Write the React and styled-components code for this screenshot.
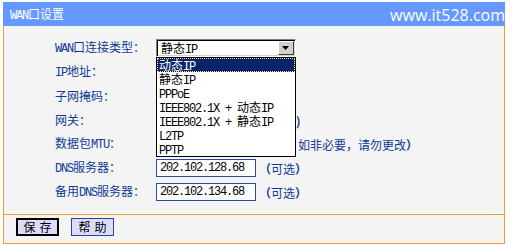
import React from 'react';
import styled, { createGlobalStyle } from 'styled-components';

const GlobalStyle = createGlobalStyle`
  body {
    margin: 0;
    background: #ffffff;
    font-family: "Noto Sans CJK SC", sans-serif;
    font-size: 12px;
  }
`;

const Panel = styled.div`
  margin: 2px 0 0 3px;
  width: 502px;
  box-sizing: border-box;
`;

const Header = styled.div`
  height: 24px;
  background: #6699ff;
  display: flex;
  align-items: center;
  justify-content: space-between;
  padding-left: 7px;
  color: #ffffff;
  overflow: hidden;
`;

const Title = styled.span`
  font-size: 12px;
`;

const Watermark = styled.span`
  font-family: "Open Sans", sans-serif;
  font-size: 16px;
  color: #ffffff;
  margin-top: 1px;
`;

const Body = styled.div`
  background: #f4f4f4;
  border-left: 1px solid #ff9933;
  border-right: 1px solid #ff9933;
  padding: 13px 0 13px 51px;
  display: flex;
  flex-direction: column;
  gap: 6px;
`;

const Row = styled.div`
  display: flex;
  align-items: center;
  height: 18px;
`;

const Label = styled.span`
  width: 101px;
  color: #123a9a;
  white-space: nowrap;
  line-height: 18px;
`;

const Asc = styled.span`
  font-family: "Liberation Mono", monospace;
  letter-spacing: -1.2px;
`;

const SelectWrap = styled.div`
  position: relative;
  width: 140px;
  height: 18px;
`;

const SelectBox = styled.div`
  box-sizing: border-box;
  height: 18px;
  width: 140px;
  background: #ffffff;
  border-top: 1px solid #808080;
  border-left: 1px solid #808080;
  border-bottom: 1px solid #ffffff;
  border-right: 1px solid #ffffff;
  box-shadow: inset 1px 1px 0 #000000, inset -1px -1px 0 #d4d0c8;
  display: flex;
  align-items: center;
  justify-content: space-between;
  padding-left: 4px;
  color: #000000;
`;

const ArrowBtn = styled.div`
  box-sizing: border-box;
  width: 16px;
  height: 14px;
  margin-right: 1px;
  background: #d4d0c8;
  border-top: 1px solid #ffffff;
  border-left: 1px solid #ffffff;
  border-bottom: 1px solid #404040;
  border-right: 1px solid #404040;
  display: flex;
  align-items: center;
  justify-content: center;
`;

const DropList = styled.ul`
  position: absolute;
  top: 18px;
  left: 0;
  width: 140px;
  box-sizing: border-box;
  margin: 0;
  padding: 0;
  list-style: none;
  background: #ffffff;
  border: 1px solid #000000;
  z-index: 2;
`;

const Item = styled.li`
  box-sizing: border-box;
  height: 14px;
  line-height: 12px;
  padding-left: 1px;
  white-space: nowrap;
  color: ${(p) => (p.$active ? '#ffffff' : '#000000')};
  background: ${(p) => (p.$active ? '#0a246a' : 'transparent')};
  border: 1px ${(p) => (p.$active ? 'dotted #ffe08a' : 'solid transparent')};
`;

const TextInput = styled.div`
  box-sizing: border-box;
  width: 100px;
  height: 18px;
  background: #ffffff;
  border: 1px solid #2a4aa8;
  padding-left: 3px;
  display: flex;
  align-items: center;
  color: #000000;
`;

const Note = styled.span`
  color: #123a9a;
  white-space: nowrap;
  margin-left: ${(p) => p.$offset || 3}px;
`;

const Bracket = styled.b`
  color: #123a9a;
`;

const Footer = styled.div`
  background: #f4f4f4;
  border: 1px solid #ff9933;
  height: 25px;
  padding: 3px 0 0 12px;
  box-sizing: content-box;
  display: flex;
  gap: 12px;
  align-items: flex-start;
`;

const Button = styled.button`
  box-sizing: border-box;
  width: 43px;
  height: 18px;
  padding: 0;
  background: #dcdcfa;
  border: ${(p) => (p.$primary ? '2px solid #000000' : '1px solid #2244aa')};
  font-family: "Noto Sans CJK SC", sans-serif;
  font-size: 12px;
  line-height: 14px;
  color: #000000;
  letter-spacing: 4px;
  text-indent: 4px;
`;

const options = [
  <>动态<Asc>IP</Asc></>,
  <>静态<Asc>IP</Asc></>,
  <Asc>PPPoE</Asc>,
  <><Asc>IEEE802.1X + </Asc>动态<Asc>IP</Asc></>,
  <><Asc>IEEE802.1X + </Asc>静态<Asc>IP</Asc></>,
  <Asc>L2TP</Asc>,
  <Asc>PPTP</Asc>,
];

function Arrow() {
  return (
    <svg width="8" height="4" viewBox="0 0 8 4">
      <path d="M0 0h7L3.5 4z" fill="#000" />
    </svg>
  );
}

export default function App() {
  return (
    <>
      <GlobalStyle />
      <Panel>
        <Header>
          <Title><Asc>WAN</Asc>口设置</Title>
          <Watermark>www.it528.com</Watermark>
        </Header>
        <Body>
          <Row>
            <Label><Asc>WAN</Asc>口连接类型：</Label>
            <SelectWrap>
              <SelectBox>
                <span>静态<Asc>IP</Asc></span>
                <ArrowBtn><Arrow /></ArrowBtn>
              </SelectBox>
              <DropList>
                {options.map((o, i) => (
                  <Item key={i} $active={i === 0}>{o}</Item>
                ))}
              </DropList>
            </SelectWrap>
          </Row>
          <Row>
            <Label><Asc>IP</Asc>地址：</Label>
          </Row>
          <Row>
            <Label>子网掩码：</Label>
          </Row>
          <Row>
            <Label>网关：</Label>
            <Note $offset={140}><Bracket>)</Bracket></Note>
          </Row>
          <Row>
            <Label>数据包<Asc>MTU</Asc>：</Label>
            <Note $offset={142}>如非必要，请勿更改<Bracket>）</Bracket></Note>
          </Row>
          <Row>
            <Label><Asc>DNS</Asc>服务器：</Label>
            <TextInput><Asc>202.102.128.68</Asc></TextInput>
            <Note><Bracket>（</Bracket>可选<Bracket>）</Bracket></Note>
          </Row>
          <Row>
            <Label>备用<Asc>DNS</Asc>服务器：</Label>
            <TextInput><Asc>202.102.134.68</Asc></TextInput>
            <Note><Bracket>（</Bracket>可选<Bracket>）</Bracket></Note>
          </Row>
        </Body>
        <Footer>
          <Button $primary>保存</Button>
          <Button>帮助</Button>
        </Footer>
      </Panel>
    </>
  );
}
